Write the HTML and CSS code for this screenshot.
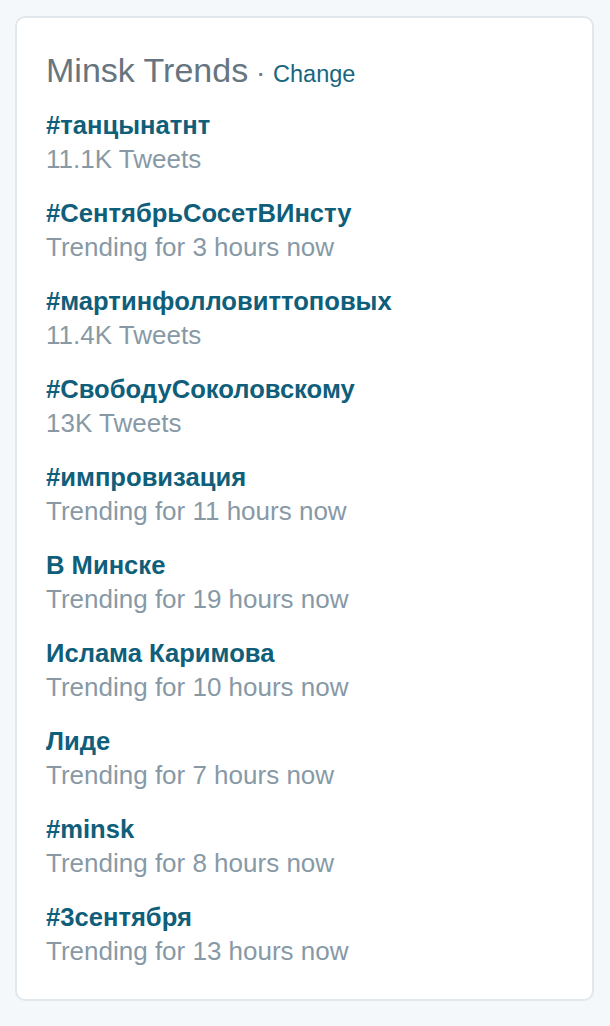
FILE: index.html
```html
<!DOCTYPE html>
<html lang="ru">
<head>
<meta charset="utf-8">
<title>Minsk Trends</title>
<link rel="stylesheet" href="styles.css">
</head>
<body>
<div class="card">
  <h3 class="title">Minsk Trends<span class="sep"> · </span><a class="change" href="#">Change</a></h3>
  <ul class="trends">
    <li class="trend"><a class="name" href="#">#танцынатнт</a><div class="meta">11.1K Tweets</div></li>
    <li class="trend"><a class="name" href="#">#СентябрьСосетВИнсту</a><div class="meta">Trending for 3 hours now</div></li>
    <li class="trend"><a class="name" href="#">#мартинфолловиттоповых</a><div class="meta">11.4K Tweets</div></li>
    <li class="trend"><a class="name" href="#">#СвободуСоколовскому</a><div class="meta">13K Tweets</div></li>
    <li class="trend"><a class="name" href="#">#импровизация</a><div class="meta">Trending for 11 hours now</div></li>
    <li class="trend"><a class="name" href="#">В Минске</a><div class="meta">Trending for 19 hours now</div></li>
    <li class="trend"><a class="name" href="#">Ислама Каримова</a><div class="meta">Trending for 10 hours now</div></li>
    <li class="trend"><a class="name" href="#">Лиде</a><div class="meta">Trending for 7 hours now</div></li>
    <li class="trend"><a class="name" href="#">#minsk</a><div class="meta">Trending for 8 hours now</div></li>
    <li class="trend"><a class="name" href="#">#3сентября</a><div class="meta">Trending for 13 hours now</div></li>
  </ul>
</div>
</body>
</html>
```
FILE: styles.css
```css
html, body {
  margin: 0;
  background: #f5f8fa;
}
body {
  padding: 16px 16px 28px 15px;
  font-family: "Liberation Sans", Arial, sans-serif;
}
.card {
  background: #fff;
  border: 2px solid #e1e8ed;
  border-radius: 10px;
  padding: 32px 28px 31px 29px;
}
.title {
  margin: 0 0 14px;
  font-size: 34px;
  line-height: 40px;
  font-weight: normal;
  color: #66757f;
}
.sep {
  font-size: 28px;
  color: #66757f;
}
.change {
  font-size: 23.5px;
  color: #176680;
  text-decoration: none;
}
.trends {
  list-style: none;
  margin: 0;
  padding: 0;
  display: flex;
  flex-direction: column;
  gap: 20px;
}
.trend {
  display: flex;
  flex-direction: column;
}
.name {
  font-size: 25.6px;
  line-height: 34px;
  font-weight: bold;
  color: #0f5e7a;
  text-decoration: none;
}
.meta {
  font-size: 26px;
  line-height: 34px;
  color: #8899a6;
}
```
